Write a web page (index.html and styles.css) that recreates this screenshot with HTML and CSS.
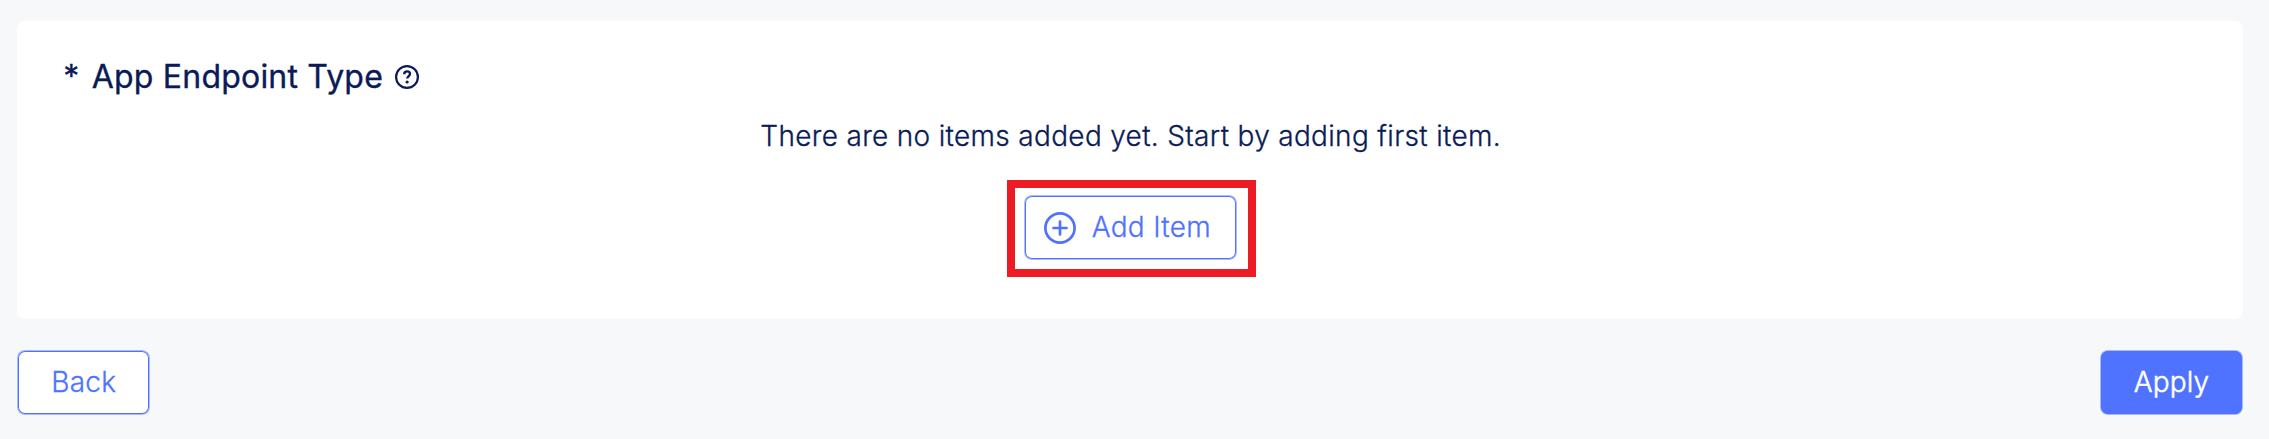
FILE: index.html
```html
<!DOCTYPE html>
<html lang="en">
<head>
<meta charset="utf-8">
<title>App Endpoint Type</title>
<link rel="stylesheet" href="styles.css">
</head>
<body>
<main class="page">
  <section class="card">
    <h2 class="title">
      <span class="required">*</span>
      <span class="title-text">App Endpoint Type</span>
      <svg class="help" viewBox="0 0 24 24" fill="none" stroke="currentColor">
        <circle cx="12" cy="12" r="10.9" stroke-width="2.2"/>
        <path d="M9.2 9.2c0-1.7 1.2-2.8 2.9-2.8s2.9 1 2.9 2.5c0 2.1-2.8 2.2-2.8 4.7" stroke-width="2.3"/>
        <circle cx="12.1" cy="17" r="1.6" fill="currentColor" stroke="none"/>
      </svg>
    </h2>
    <p class="empty">There are no items added yet. Start by adding first item.</p>
    <div class="highlight">
      <button class="btn btn-add" type="button">
        <svg class="plus" viewBox="0 0 32 32" fill="none" stroke="currentColor" stroke-width="2.7" stroke-linecap="round">
          <circle cx="16" cy="16" r="14.6"/>
          <path d="M16 9.5v13M9.5 16h13"/>
        </svg>
        <span class="add-text">Add Item</span>
      </button>
    </div>
  </section>
  <footer class="actions">
    <button class="btn btn-back" type="button"><span class="back-text">Back</span></button>
    <button class="btn btn-apply" type="button"><span class="apply-text">Apply</span></button>
  </footer>
</main>
</body>
</html>
```
FILE: styles.css
```css
* { box-sizing: border-box; }
body {
  margin: 0;
  background: #f7f8fa;
  color: #0a1b57;
  font-family: Inter, "Liberation Sans", sans-serif;
}
.page {
  height: 439px;
  padding: 21px 26px 0 17.3px;
}
.card {
  display: flex;
  flex-direction: column;
  align-items: center;
  height: 297.5px;
  padding: 36px 0 0 46px;
  border-radius: 8px;
  background: #fff;
}
.title {
  display: flex;
  align-items: center;
  align-self: flex-start;
  height: 40px;
  margin: 0;
  font-size: 32px;
  font-weight: 400;
  line-height: 40px;
  white-space: nowrap;
  -webkit-text-stroke: 0.35px currentColor;
}
.required { width: 28.5px; }
.title-text { width: 303px; letter-spacing: 0.2px; }
.help { width: 24px; height: 24px; }
.empty {
  margin: 19px 45px 0 0;
  font-size: 28px;
  font-weight: 300;
  line-height: 40px;
  letter-spacing: 0.32px;
  white-space: nowrap;
  -webkit-text-stroke: 0.3px currentColor;
}
.highlight {
  width: 249px;
  height: 97px;
  margin: 24px 44px 0 0;
  padding: 7px 0 0 9px;
  border: 8px solid #ed1c24;
}
.btn {
  display: flex;
  align-items: center;
  justify-content: center;
  height: 65px;
  padding: 0;
  border: 1px solid #4f73ff77;
  border-radius: 8px;
  background: #fff;
  background-clip: padding-box;
  box-shadow: inset 0 0 0 1px #4f73ff;
  color: #4f73ff;
  font: 300 28px/40px Inter, "Liberation Sans", sans-serif;
  letter-spacing: 0.3px;
  white-space: nowrap;
  -webkit-text-stroke: 0.3px currentColor;
}
.btn-add {
  justify-content: flex-start;
  gap: 16px;
  width: 213px;
  padding-left: 19px;
}
.plus { width: 32px; height: 32px; }
.add-text, .back-text, .apply-text { margin-top: -2px; }
.actions {
  display: flex;
  justify-content: space-between;
  margin-top: 31.5px;
}
.btn-back { width: 133px; }
.btn-apply {
  width: 143px;
  background-color: #4f73ff;
  color: #fff;
  letter-spacing: 0.1px;
  -webkit-text-stroke-width: 0.5px;
}
```
